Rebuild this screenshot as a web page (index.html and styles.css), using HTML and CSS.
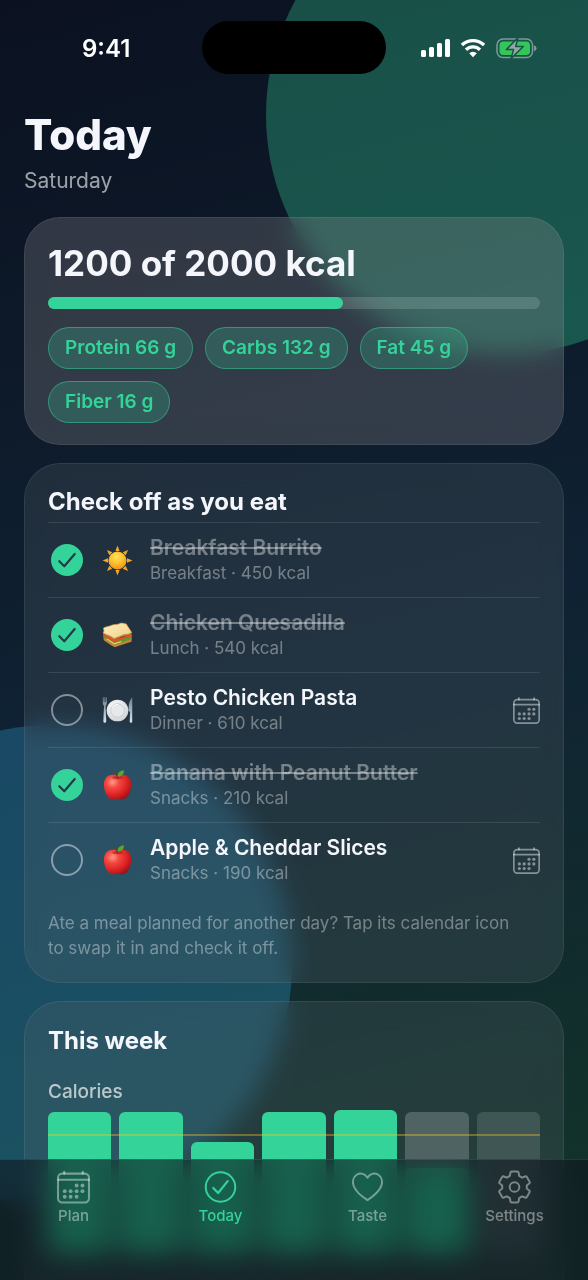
FILE: index.html
```html
<!DOCTYPE html>
<html lang="en">
<head>
<meta charset="utf-8">
<meta name="viewport" content="width=device-width, initial-scale=1">
<title>Today</title>
<link rel="stylesheet" href="styles.css">
</head>
<body>
<svg class="defs" width="0" height="0" aria-hidden="true">
  <defs>
    <radialGradient id="sunFill" cx=".45" cy=".3" r=".75"><stop offset="0" stop-color="#ffe45c"/><stop offset=".5" stop-color="#fdbf2d"/><stop offset="1" stop-color="#f08c14"/></radialGradient>
    <radialGradient id="appleFill" cx=".32" cy=".3" r=".8"><stop offset="0" stop-color="#ff9a86"/><stop offset=".3" stop-color="#f4473f"/><stop offset=".7" stop-color="#d81f22"/><stop offset="1" stop-color="#94101a"/></radialGradient>
    <linearGradient id="breadFill" x1="0" y1="0" x2="1" y2="1"><stop offset="0" stop-color="#fdf0bd"/><stop offset="1" stop-color="#f0cf86"/></linearGradient>
    <linearGradient id="steel" x1="0" y1="0" x2="0" y2="1"><stop offset="0" stop-color="#6f7c86"/><stop offset="1" stop-color="#d7e6f2"/></linearGradient>
    <radialGradient id="plateFill" cx=".4" cy=".35" r=".7"><stop offset="0" stop-color="#ffffff"/><stop offset="1" stop-color="#cfd3d6"/></radialGradient>
  </defs>
  <symbol id="sun" viewBox="0 0 32 32">
    <g fill="#f9a51f">
      <path id="ray" d="M16 .6 18.200 6.200H13.800Z"/>
      <use href="#ray" transform="rotate(45 16 16)"/><use href="#ray" transform="rotate(90 16 16)"/><use href="#ray" transform="rotate(135 16 16)"/><use href="#ray" transform="rotate(180 16 16)"/><use href="#ray" transform="rotate(225 16 16)"/><use href="#ray" transform="rotate(270 16 16)"/><use href="#ray" transform="rotate(315 16 16)"/>
    </g>
    <circle cx="16" cy="16" r="9.300" fill="url(#sunFill)"/>
  </symbol>
  <symbol id="sandwich" viewBox="0 0 32 32">
    <path d="M1.4 17 13 23 30.6 18.5 30.4 22.5 21.5 25.3 13.2 28.2 9.5 26 1.8 21Z" fill="#c98435"/>
    <path d="M1.4 15 12.5 22 30.8 16.3 30.6 19.5 20 23.6 13 25.6 1.5 18Z" fill="#5f9a2b"/>
    <path d="M1.2 14 12.4 20.5 30.8 14.8 30.6 17 20.5 19.8 12.8 23 1.3 16.4Z" fill="#e0502f"/>
    <path d="M5 19.5 12.8 24.6 20 22.3" fill="none" stroke="#f1d37c" stroke-width="1.1"/>
    <path d="M1.2 11.8 12.4 17.6 30.6 13.6 30.5 15.4 20.8 17.2 12.4 20.8 1.2 14.4Z" fill="#bd7129"/>
    <path d="M1.6 8.2C4.5 6.7 7.5 6.7 10 5.4 12.8 4 15.5 5.3 18.5 3.6 21 2.4 23.4 4.2 25.2 4.2 26.5 7 28.8 9.5 30.7 13 27.5 15.2 24 14.4 20.5 15.9 17.6 17 15 17.8 12.3 19.1 9 15.8 4 15.8 1.2 13 3 11 1.3 9.8 1.6 8.2Z" fill="url(#breadFill)" stroke="#d79a46" stroke-width=".7"/>
  </symbol>
  <symbol id="plate" viewBox="0 0 32 32">
    <circle cx="16" cy="16" r="11.2" fill="url(#plateFill)"/>
    <circle cx="16" cy="16" r="7.1" fill="#e7e8e9" stroke="#bfc3c6" stroke-width=".7"/>
    <path d="M10.3 13.5a6.3 6.3 0 0 1 6-3.8" fill="none" stroke="#fff" stroke-width=".9"/>
    <path d="M.8 2.2h1v5h.6v-5h1v5H4v-5h1V8q0 2.4-1.3 3l.7 16q0 1.6-1.5 1.6T1.4 27l.7-16Q.8 10.400.8 8Z" fill="url(#steel)"/>
    <path d="M31.200 2.2V27q0 1.600-1.300 1.600T28.600 27l.4-9.800-1.500-.8q-.5-10.200 3.700-14.200Z" fill="url(#steel)"/>
  </symbol>
  <symbol id="apple" viewBox="0 0 32 32">
    <path d="M16.200 6.400C11 3.200 2 5.200 2 15.200 2 22.800 6.300 30.400 11.400 30.400 13.400 30.400 14.500 29.700 16.100 29.700S19 30.400 20.800 30.400C26 30.400 30.200 22.600 30.200 15 30.200 5.400 21.500 3.200 16.200 6.400Z" fill="url(#appleFill)"/>
    <ellipse cx="16.200" cy="7.800" rx="5.500" ry="1.700" fill="#a81b20" opacity=".6"/>
    <path d="M16 8.300C15.800 5.500 14.400 3.400 12.200 2" fill="none" stroke="#6c421e" stroke-width="1.300" stroke-linecap="round"/>
    <path d="M16.300 6.800C15.600 3 18.300.6 22.400.2 23.200 3.700 20.500 6.800 16.300 6.800Z" fill="#5ba52b"/>
  </symbol>
  <symbol id="calendar" viewBox="0 0 32 32">
    <g fill="none" stroke="currentColor" stroke-width="2" stroke-linecap="round">
      <rect x="1" y="3" width="30" height="28" rx="4"/>
      <path d="M1 9H31M7 1.300V3M25 1.300V3"/>
    </g>
    <g fill="currentColor">
      <circle cx="19" cy="14.500" r="1.900"/><circle cx="24.700" cy="14.500" r="1.900"/>
      <circle cx="7.500" cy="20" r="1.900"/><circle cx="13.200" cy="20" r="1.900"/><circle cx="19" cy="20" r="1.900"/><circle cx="24.700" cy="20" r="1.900"/>
      <circle cx="7.500" cy="25.500" r="1.900"/><circle cx="13.200" cy="25.500" r="1.900"/><circle cx="19" cy="25.500" r="1.900"/>
    </g>
  </symbol>
  <symbol id="tick" viewBox="0 0 32 32">
    <path d="M8.300 17.200 13.300 22.300 23.700 10" fill="none" stroke="currentColor" stroke-width="2.200" stroke-linecap="round" stroke-linejoin="round"/>
  </symbol>
</svg>

<div class="screen">
  <div class="orb orb-green"></div>
  <div class="orb orb-blue"></div>

  <div class="status">
    <time class="clock">9:41</time>
    <div class="island"></div>
    <div class="signals">
      <svg width="29" height="20" viewBox="0 0 29 20" fill="#fff" aria-label="Signal">
        <rect x="0" y="12" width="5" height="7" rx="1.500"/><rect x="8" y="9" width="5" height="10" rx="1.500"/><rect x="16" y="5" width="5" height="14" rx="1.500"/><rect x="24" y="1" width="5" height="18" rx="1.500"/>
      </svg>
      <svg width="26" height="20" viewBox="0 0 26 20" aria-label="Wi-Fi">
        <g fill="none" stroke="#fff" stroke-width="3.400"><path d="M1.900 7A16.300 16.300 0 0 1 24.100 7"/><path d="M6 11.700A10 10 0 0 1 20 11.700"/></g>
        <path d="M9.200 15.200a5.500 5.500 0 0 1 7.600 0L13 19.200Z" fill="#fff"/>
      </svg>
      <svg width="41" height="22" viewBox="0 0 41 22" aria-label="Battery charging">
        <rect x="1" y="2" width="35.500" height="18.500" rx="6" fill="none" stroke="#7c9c96" stroke-width="1.500"/>
        <path d="M38 8.300q2.500.8 2.500 3t-2.500 3Z" fill="#7c9c96"/>
        <rect x="3.500" y="4.500" width="30.500" height="13.500" rx="3.800" fill="#33c759"/>
        <path d="M22 .8 10.300 12.600H17.500L15 21.600 27.300 9.500H19.700Z" fill="#8fa9a4" stroke="#1b5249" stroke-width="1.500" stroke-linejoin="round"/>
      </svg>
    </div>
  </div>

  <main class="content">
    <header class="page-head">
      <h1>Today</h1>
      <p>Saturday</p>
    </header>

    <section class="card summary">
      <h2 id="energy">1200 of 2000 kcal</h2>
      <div class="progress" role="progressbar" aria-labelledby="energy" aria-valuenow="1200" aria-valuemax="2000"><div class="progress-fill" style="width:60%"></div></div>
      <ul class="chips">
        <li>Protein 66 g</li><li>Carbs 132 g</li><li>Fat 45 g</li><li>Fiber 16 g</li>
      </ul>
    </section>

    <section class="card">
      <h3>Check off as you eat</h3>
      <ul class="meals">
        <li>
          <span class="check"><input type="checkbox" id="m1" checked><svg><use href="#tick"/></svg></span>
          <svg class="emoji"><use href="#sun"/></svg>
          <label for="m1"><span class="name">Breakfast Burrito</span><span class="meta">Breakfast · 450 kcal</span></label>
        </li>
        <li>
          <span class="check"><input type="checkbox" id="m2" checked><svg><use href="#tick"/></svg></span>
          <svg class="emoji"><use href="#sandwich"/></svg>
          <label for="m2"><span class="name">Chicken Quesadilla</span><span class="meta">Lunch · 540 kcal</span></label>
        </li>
        <li>
          <span class="check"><input type="checkbox" id="m3"><svg><use href="#tick"/></svg></span>
          <svg class="emoji"><use href="#plate"/></svg>
          <label for="m3"><span class="name">Pesto Chicken Pasta</span><span class="meta">Dinner · 610 kcal</span></label>
          <button type="button" class="swap" aria-label="Swap day"><svg><use href="#calendar"/></svg></button>
        </li>
        <li>
          <span class="check"><input type="checkbox" id="m4" checked><svg><use href="#tick"/></svg></span>
          <svg class="emoji"><use href="#apple"/></svg>
          <label for="m4"><span class="name">Banana with Peanut Butter</span><span class="meta">Snacks · 210 kcal</span></label>
        </li>
        <li>
          <span class="check"><input type="checkbox" id="m5"><svg><use href="#tick"/></svg></span>
          <svg class="emoji"><use href="#apple"/></svg>
          <label for="m5"><span class="name">Apple &amp; Cheddar Slices</span><span class="meta">Snacks · 190 kcal</span></label>
          <button type="button" class="swap" aria-label="Swap day"><svg><use href="#calendar"/></svg></button>
        </li>
      </ul>
      <p class="hint">Ate a meal planned for another day? Tap its calendar icon to swap it in and check it off.</p>
    </section>

    <section class="card week">
      <h3>This week</h3>
      <h4>Calories</h4>
      <div class="chart">
        <div class="bar" style="height:98%"></div>
        <div class="bar" style="height:98%"></div>
        <div class="bar" style="height:77%"></div>
        <div class="bar" style="height:98%"></div>
        <div class="bar" style="height:99%"></div>
        <div class="bar planned" style="height:98%"><div class="bar eaten" style="height:60%"></div></div>
        <div class="bar future" style="height:98%"></div>
        <div class="goal"></div>
      </div>
    </section>
  </main>

  <nav class="tabs">
    <a href="#plan"><svg><use href="#calendar"/></svg>Plan</a>
    <a href="#today" class="active" aria-current="page">
      <svg viewBox="0 0 32 32"><circle cx="16" cy="16" r="14.300" fill="none" stroke="currentColor" stroke-width="1.900"/><path d="M9 17 13.700 21.800 23 10.300" fill="none" stroke="currentColor" stroke-width="2.200" stroke-linecap="round" stroke-linejoin="round"/></svg>Today</a>
    <a href="#taste">
      <svg viewBox="0 0 32 32" fill="none" stroke="currentColor" stroke-width="1.900" stroke-linejoin="round"><path d="M16 7C13.800 3.200 9.300 1.900 5.900 3.900 2.200 6.100 1 10.700 2.600 15 4.700 20.300 10 24.900 16 28.700 22 24.900 27.300 20.300 29.400 15 31 10.700 29.800 6.100 26.100 3.900 22.700 1.900 18.200 3.200 16 7Z"/></svg>Taste</a>
    <a href="#settings">
      <svg viewBox="0 0 32 32" fill="none" stroke="currentColor" stroke-width="1.900" stroke-linejoin="round"><circle cx="16" cy="16" r="4.700"/><path d="M13.400 1H18.600Q19.800 1 20 2.200L20.500 5.300 23.400 7 26.300 5.800Q27.400 5.400 28 6.400L30.600 10.800Q31.200 11.900 30.300 12.600L27.900 14.500V17.500L30.300 19.400Q31.200 20.100 30.600 21.200L28 25.600Q27.400 26.600 26.300 26.200L23.400 25 20.500 26.700 20 29.800Q19.800 31 18.600 31H13.400Q12.200 31 12 29.800L11.500 26.700 8.600 25 5.700 26.200Q4.600 26.600 4 25.600L1.400 21.200Q.8 20.100 1.700 19.400L4.100 17.500V14.500L1.700 12.600Q.8 11.900 1.400 10.800L4 6.400Q4.600 5.400 5.700 5.800L8.600 7 11.500 5.300 12 2.200Q12.200 1 13.400 1Z"/></svg>Settings</a>
  </nav>
</div>
</body>
</html>
```
FILE: styles.css
```css
:root {
  --green: #34d399;
  --text: #f4f6fb;
  --muted: rgba(255, 255, 255, .6);
  --faint: rgba(255, 255, 255, .38);
  --line: rgba(255, 255, 255, .1);
}

* { box-sizing: border-box; }

body {
  margin: 0;
  font-family: Inter, "Liberation Sans", sans-serif;
  color: var(--text);
  background: #0b1120;
}

h1, h2, h3, h4, p, ul { margin: 0; padding: 0; }
ul { list-style: none; }
.defs { position: absolute; }

.screen {
  position: relative;
  height: 100vh;
  overflow: hidden;
  background: linear-gradient(165deg, #0b1120 0%, #0f2233 52%, #11292f 70%, #123528 100%);
}

/* Background light */
.orb { position: absolute; border-radius: 50%; }
.orb-green {
  width: 478px;
  height: 478px;
  top: -124px;
  right: -156px;
  background: rgba(52, 211, 153, .32);
}
.orb-blue {
  width: 480px;
  height: 480px;
  top: 725px;
  left: -188px;
  background: rgba(50, 165, 220, .3);
}

/* Status bar */
.status {
  position: relative;
  display: grid;
  grid-template-columns: 1fr auto 1fr;
  align-items: center;
  padding: 21px 51px 0;
  margin-bottom: 36px;
}
.clock { padding: 2px 0 0 31px; font-size: 24px; font-weight: 600; line-height: 30px; color: #fff; }
.island { width: 184px; height: 53px; border-radius: 27px; background: #000; }
.signals { display: flex; justify-content: flex-end; align-items: center; gap: 10px; }

.content { position: relative; padding: 0 24px; }

.page-head { margin-bottom: 22px; }
.page-head h1 { font-size: 42px; line-height: 50px; font-weight: 800; }
.page-head p { margin-top: 7px; font-size: 21px; line-height: 28px; color: var(--muted); }

/* Cards */
.card {
  margin-bottom: 18px;
  padding: 23px 23px 21px;
  border: 1px solid rgba(255, 255, 255, .08);
  border-radius: 36px;
  background: rgba(88, 100, 110, .26);
  backdrop-filter: blur(12px);
}
.card h3 { font-size: 24px; line-height: 30px; font-weight: 700; }

.summary { padding-top: 24px; background: rgba(148, 145, 148, .28); }
.summary h2 { font-size: 35px; line-height: 42px; font-weight: 700; }
.progress {
  height: 12px;
  margin: 13px 0 18px;
  border-radius: 6px;
  background: rgba(255, 255, 255, .15);
}
.progress-fill { height: 100%; border-radius: 6px; background: var(--green); }

.chips { display: flex; flex-wrap: wrap; gap: 12px; }
.chips li {
  padding: 0 16px;
  border: 1px solid rgba(52, 211, 153, .5);
  border-radius: 21px;
  font-size: 19px;
  line-height: 40px;
  font-weight: 600;
  color: var(--green);
  background: rgba(52, 211, 153, .22);
}

/* Meal list */
.meals { margin-top: 5px; }
.meals li {
  display: grid;
  grid-template-columns: 38px 32px 1fr auto;
  column-gap: 16px;
  align-items: center;
  height: 75px;
  border-top: 1px solid var(--line);
}
.check { display: grid; place-items: center; }
.check input, .check svg { grid-area: 1 / 1; width: 32px; height: 32px; margin: 0; }
.check input {
  appearance: none;
  border: 2px solid rgba(255, 255, 255, .45);
  border-radius: 50%;
}
.check input:checked { border: 0; background: var(--green); }
.check svg { color: #203c48; pointer-events: none; visibility: hidden; }
.check input:checked + svg { visibility: visible; }
.emoji { width: 31px; height: 31px; }
.name, .meta { display: block; }
.name { font-size: 21px; line-height: 26px; font-weight: 600; }
.meta { font-size: 17px; line-height: 24px; color: var(--faint); }
.check:has(:checked) ~ label .name { color: var(--faint); text-decoration: line-through 2px; }
.swap { display: block; padding: 0; border: 0; background: none; color: rgba(255, 255, 255, .45); }
.swap svg { display: block; width: 27px; height: 27px; }
.hint { margin-top: 14px; padding-right: 16px; font-size: 17px; line-height: 25px; color: var(--faint); }

/* Weekly chart */
.week { padding: 24px 23px 200px; }
.week h4 { margin-top: 24px; font-size: 19px; line-height: 24px; font-weight: 500; color: rgba(255, 255, 255, .68); }
.chart {
  position: relative;
  display: grid;
  grid-template-columns: repeat(7, 1fr);
  column-gap: 8px;
  align-items: end;
  height: 144px;
  margin-top: 5px;
}
.bar { border-radius: 6px; background: var(--green); }
.planned { display: flex; align-items: flex-end; background: rgba(255, 255, 255, .2); }
.eaten { flex: 1; }
.future { background: rgba(255, 255, 255, .13); }
.goal {
  position: absolute;
  inset: 25px 0 auto;
  height: 2px;
  background: rgba(251, 191, 36, .38);
}

/* Tab bar */
.tabs {
  position: absolute;
  inset: auto 0 0;
  display: grid;
  grid-template-columns: repeat(4, 1fr);
  padding: 10px 0 55px;
  border-top: 1px solid var(--line);
  background: rgba(16, 22, 32, .62);
  backdrop-filter: blur(14px) saturate(1.15);
}
.tabs a {
  display: flex;
  flex-direction: column;
  align-items: center;
  gap: 3px;
  font-size: 15px;
  line-height: 18px;
  font-weight: 500;
  color: rgba(255, 255, 255, .42);
  text-decoration: none;
}
.tabs svg { width: 33px; height: 34px; }
.tabs .active { color: var(--green); }
```
